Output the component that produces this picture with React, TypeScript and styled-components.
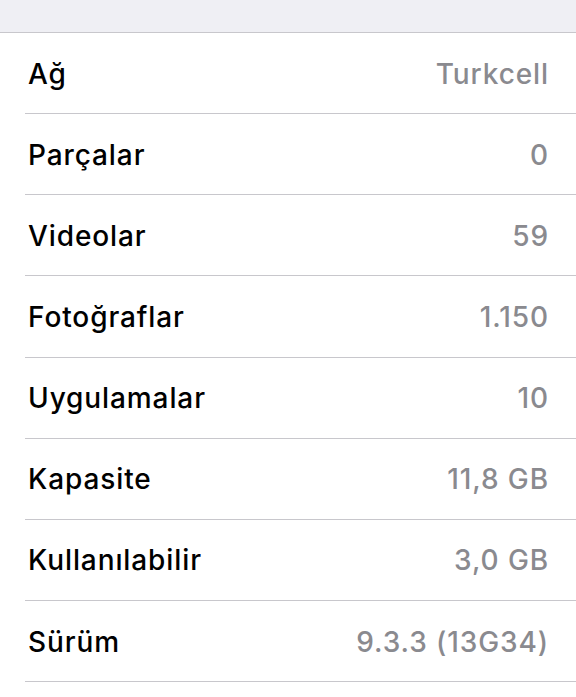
import React from "react";
import styled, { createGlobalStyle } from "styled-components";

const Global = createGlobalStyle`
  html, body { margin: 0; padding: 0; background: #ffffff; }
  body { font-family: Inter, "Noto Sans", "Liberation Sans", sans-serif; -webkit-font-smoothing: antialiased; }
`;

const Page = styled.div`
  width: 576px;
  min-height: 697px;
  background: #ffffff;
  display: flex;
  flex-direction: column;
`;

const TopBand = styled.div`
  height: 32px;
  background: #efeff4;
  border-bottom: 1px solid #c8c7cc;
`;

const List = styled.ul`
  list-style: none;
  margin: 0;
  padding: 0 0 0 25px;
  display: flex;
  flex-direction: column;
`;

const Row = styled.li`
  box-sizing: border-box;
  height: 81.15px;
  border-bottom: 1px solid #c8c7cc;
  display: flex;
  align-items: center;
  justify-content: space-between;
  padding: 1px 27px 0 3px;
  font-size: 28px;
  letter-spacing: 0.9px;
`;

const Label = styled.span`
  color: #000000;
  font-weight: 500;
`;

const Value = styled.span`
  color: #8a8a8f;
  font-weight: 500;
`;

const rows: [string, string][] = [
  ["Ağ", "Turkcell"],
  ["Parçalar", "0"],
  ["Videolar", "59"],
  ["Fotoğraflar", "1.150"],
  ["Uygulamalar", "10"],
  ["Kapasite", "11,8 GB"],
  ["Kullanılabilir", "3,0 GB"],
  ["Sürüm", "9.3.3 (13G34)"],
];

export default function App() {
  return (
    <Page>
      <Global />
      <TopBand />
      <List>
        {rows.map(([l, v]) => (
          <Row key={l}>
            <Label>{l}</Label>
            <Value>{v}</Value>
          </Row>
        ))}
      </List>
    </Page>
  );
}
